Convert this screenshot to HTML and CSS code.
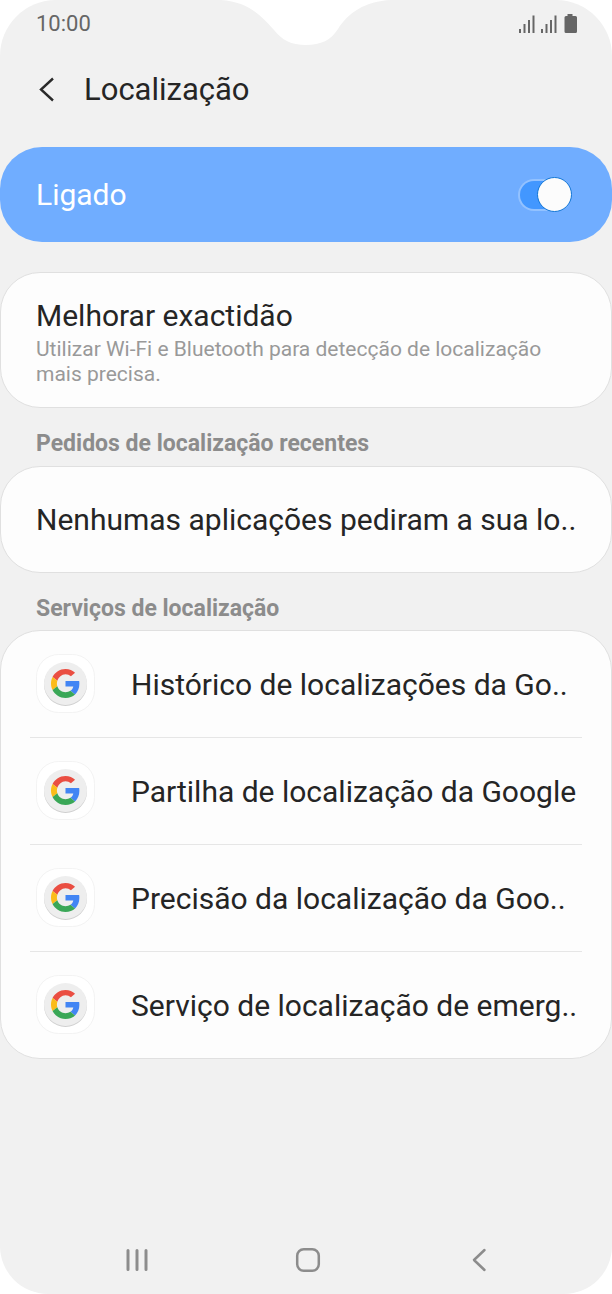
FILE: index.html
```html
<!DOCTYPE html>
<html lang="pt">
<head>
<meta charset="utf-8">
<meta name="viewport" content="width=device-width, initial-scale=1">
<title>Localização</title>
<link rel="stylesheet" href="styles.css">
</head>
<body>
<svg width="0" height="0" class="defs" aria-hidden="true">
  <symbol id="google" viewBox="0 0 60 60">
    <rect x="0.5" y="0.5" width="58" height="58" rx="22" fill="#fff" stroke="#f3f3f3"/>
    <circle cx="29.5" cy="30.5" r="21.5" fill="#cfcfcf"/>
    <circle cx="29.5" cy="29.5" r="21.5" fill="#eee"/>
    <g transform="translate(15 15) scale(0.604)">
      <path fill="#ea4e42" d="M24 8.500c3.540 0 6.500 1.220 9 3.600l6.850-5.850C35.900 2.380 30.470 0 24 0 14.620 0 6.510 5.380 2.560 13.220l7.980 6.190C12.430 13.720 17.740 8.500 24 8.500z"/>
      <path fill="#4285f4" d="M46.980 24.550c0-1.570-.15-3.090-.38-4.550H24v9.020h12.940c-.58 2.960-2.260 5.480-4.780 7.180l7.730 6c4.510-4.180 7.090-10.360 7.090-17.650z"/>
      <path fill="#fbbc1a" d="M10.530 28.590c-.48-1.450-.76-2.990-.76-4.590s.27-3.140.76-4.590l-7.980-6.190C.92 16.460 0 20.120 0 24s.92 7.540 2.560 10.780l7.970-6.190z"/>
      <path fill="#3aa757" d="M24 48c6.480 0 11.930-2.130 15.890-5.810l-7.730-6c-2.150 1.450-4.920 2.300-8.160 2.300-6.260 0-11.570-4.220-13.470-9.910l-7.980 6.190C6.510 42.620 14.620 48 24 48z"/>
    </g>
  </symbol>
</svg>
<div class="phone">
  <svg class="notch" width="170" height="46" viewBox="0 0 170 46" aria-hidden="true">
    <path d="M0 0C26 2 38 13 53 30C61 40 70 45 85 45C100 45 110 40 117 29C127 13 144 1 170 0Z" fill="#fff"/>
  </svg>
  <div class="status">
    <span>10:00</span>
    <svg width="60" height="20" viewBox="0 0 60 20" fill="#666" aria-hidden="true">
      <path d="M0 15h2v4H0zM4.500 10h2v9h-2zM9 6h2v13H9zM13.500 1.500h2V19h-2zM22 15h2v4h-2zM26.500 10h2v9h-2zM31 6h2v13h-2zM35.500 1.500h2V19h-2z"/>
      <path d="M48.500 0h5v2h3a1.500 1.500 0 0 1 1.500 1.500v14a1.500 1.500 0 0 1-1.500 1.500H47a1.500 1.500 0 0 1-1.500-1.500v-14A1.500 1.500 0 0 1 47 2h1.500z"/>
    </svg>
  </div>
  <header class="appbar">
    <button class="icon-button" type="button" aria-label="Voltar">
      <svg width="20" height="26" viewBox="0 0 20 26" fill="none" stroke="#2a2a2a" stroke-width="2.400"><path d="M17 1.500L5 12.500L17 23.500"/></svg>
    </button>
    <h1 class="title">Localização</h1>
  </header>
  <main>
    <label class="master">
      <span>Ligado</span>
      <input class="switch" type="checkbox" role="switch" checked>
    </label>
    <section class="card accuracy">
      <h2 class="item-title">Melhorar exactidão</h2>
      <p class="note">Utilizar Wi-Fi e Bluetooth para detecção de localização mais precisa.</p>
    </section>
    <h2 class="section-label">Pedidos de localização recentes</h2>
    <section class="card">
      <p class="row">Nenhumas aplicações pediram a sua lo..</p>
    </section>
    <h2 class="section-label">Serviços de localização</h2>
    <section class="card services">
      <button class="row service" type="button"><svg class="logo" aria-hidden="true"><use href="#google"/></svg><span>Histórico de localizações da Go..</span></button>
      <button class="row service" type="button"><svg class="logo" aria-hidden="true"><use href="#google"/></svg><span>Partilha de localização da Google</span></button>
      <button class="row service" type="button"><svg class="logo" aria-hidden="true"><use href="#google"/></svg><span>Precisão da localização da Goo..</span></button>
      <button class="row service" type="button"><svg class="logo" aria-hidden="true"><use href="#google"/></svg><span>Serviço de localização de emerg..</span></button>
    </section>
  </main>
  <nav class="navbar" aria-label="Sistema">
    <button class="icon-button" type="button" aria-label="Recentes">
      <svg width="26" height="26" viewBox="0 0 26 26" stroke="#8c8c8c" stroke-width="3" stroke-linecap="round"><path d="M4 3.500v19M13 3.500v19M22 3.500v19"/></svg>
    </button>
    <button class="icon-button" type="button" aria-label="Início">
      <svg width="26" height="26" viewBox="0 0 26 26" fill="none" stroke="#8c8c8c" stroke-width="2.500"><rect x="2.200" y="2.200" width="21.600" height="21.600" rx="6.500"/></svg>
    </button>
    <button class="icon-button" type="button" aria-label="Retroceder">
      <svg width="26" height="26" viewBox="0 0 26 26" fill="none" stroke="#8c8c8c" stroke-width="2.500" stroke-linecap="round" stroke-linejoin="round"><path d="M18.500 3L8 13L18.500 23"/></svg>
    </button>
  </nav>
</div>
</body>
</html>
```
FILE: styles.css
```css
* {
  box-sizing: border-box;
}

body {
  margin: 0;
  background: #fff;
  color: #252525;
  font-family: Roboto, "Liberation Sans", sans-serif;
  font-size: 30px;
}

h1, h2, p {
  margin: 0;
  font-size: inherit;
  font-weight: 400;
}

button {
  padding: 0;
  border: 0;
  background: none;
  color: inherit;
  font: inherit;
  text-align: left;
}

.defs {
  position: absolute;
}

.phone {
  position: relative;
  display: flex;
  flex-direction: column;
  min-height: 100vh;
  background: #f1f1f1;
  border-radius: 56px 56px 48px 48px;
  overflow: hidden;
}

.notch {
  position: absolute;
  top: 0;
  left: 50%;
  transform: translateX(-50%);
}

.status {
  display: flex;
  justify-content: space-between;
  align-items: center;
  height: 47px;
  padding: 0 33px 0 36px;
  color: #666;
  font-size: 22px;
}

.appbar {
  display: flex;
  align-items: center;
  gap: 28px;
  height: 100px;
  padding: 0 36px 15px;
}

.icon-button {
  display: flex;
}

.title {
  font-size: 31px;
  line-height: 40px;
}

.master {
  display: flex;
  justify-content: space-between;
  align-items: center;
  height: 95px;
  margin-bottom: 30px;
  padding: 0 40px 0 36px;
  border-radius: 42px;
  background: #70adff;
  color: #fff;
}

.switch {
  appearance: none;
  display: flex;
  justify-content: flex-end;
  align-items: center;
  width: 54px;
  height: 32px;
  margin: 0;
  border: 2px solid #93c2ff;
  border-right: 0;
  border-radius: 16px;
  background: #4297ff;
}

.switch::before {
  content: "";
  flex: none;
  width: 33px;
  height: 33px;
  border: 1px solid #1276d6;
  border-radius: 50%;
  background: #fcfcfc;
}

.card {
  border: 1px solid #e0e0e0;
  border-radius: 40px;
  background: #fdfdfd;
}

.accuracy {
  padding: 22px 35px 20px;
}

.item-title {
  line-height: 42px;
}

.note {
  color: #999;
  font-size: 21px;
  line-height: 25px;
}

.section-label {
  padding: 20px 36px 7px;
  color: #8c8c8c;
  font-size: 23px;
  font-weight: 700;
  line-height: 31px;
}

.row {
  display: flex;
  align-items: center;
  width: 100%;
  height: 105px;
  padding: 0 35px;
  white-space: nowrap;
}

.services {
  margin-top: -1px;
  padding: 0 29px;
}

.service {
  gap: 35px;
  height: 107px;
  padding: 0 6px;
}

.service:first-child {
  height: 106px;
}

.service + .service {
  border-top: 1px solid #e6e6e6;
}

.logo {
  flex: none;
  width: 60px;
  height: 60px;
}

.navbar {
  display: flex;
  justify-content: space-between;
  margin-top: auto;
  padding: 0 120px 21px 124px;
}
```
